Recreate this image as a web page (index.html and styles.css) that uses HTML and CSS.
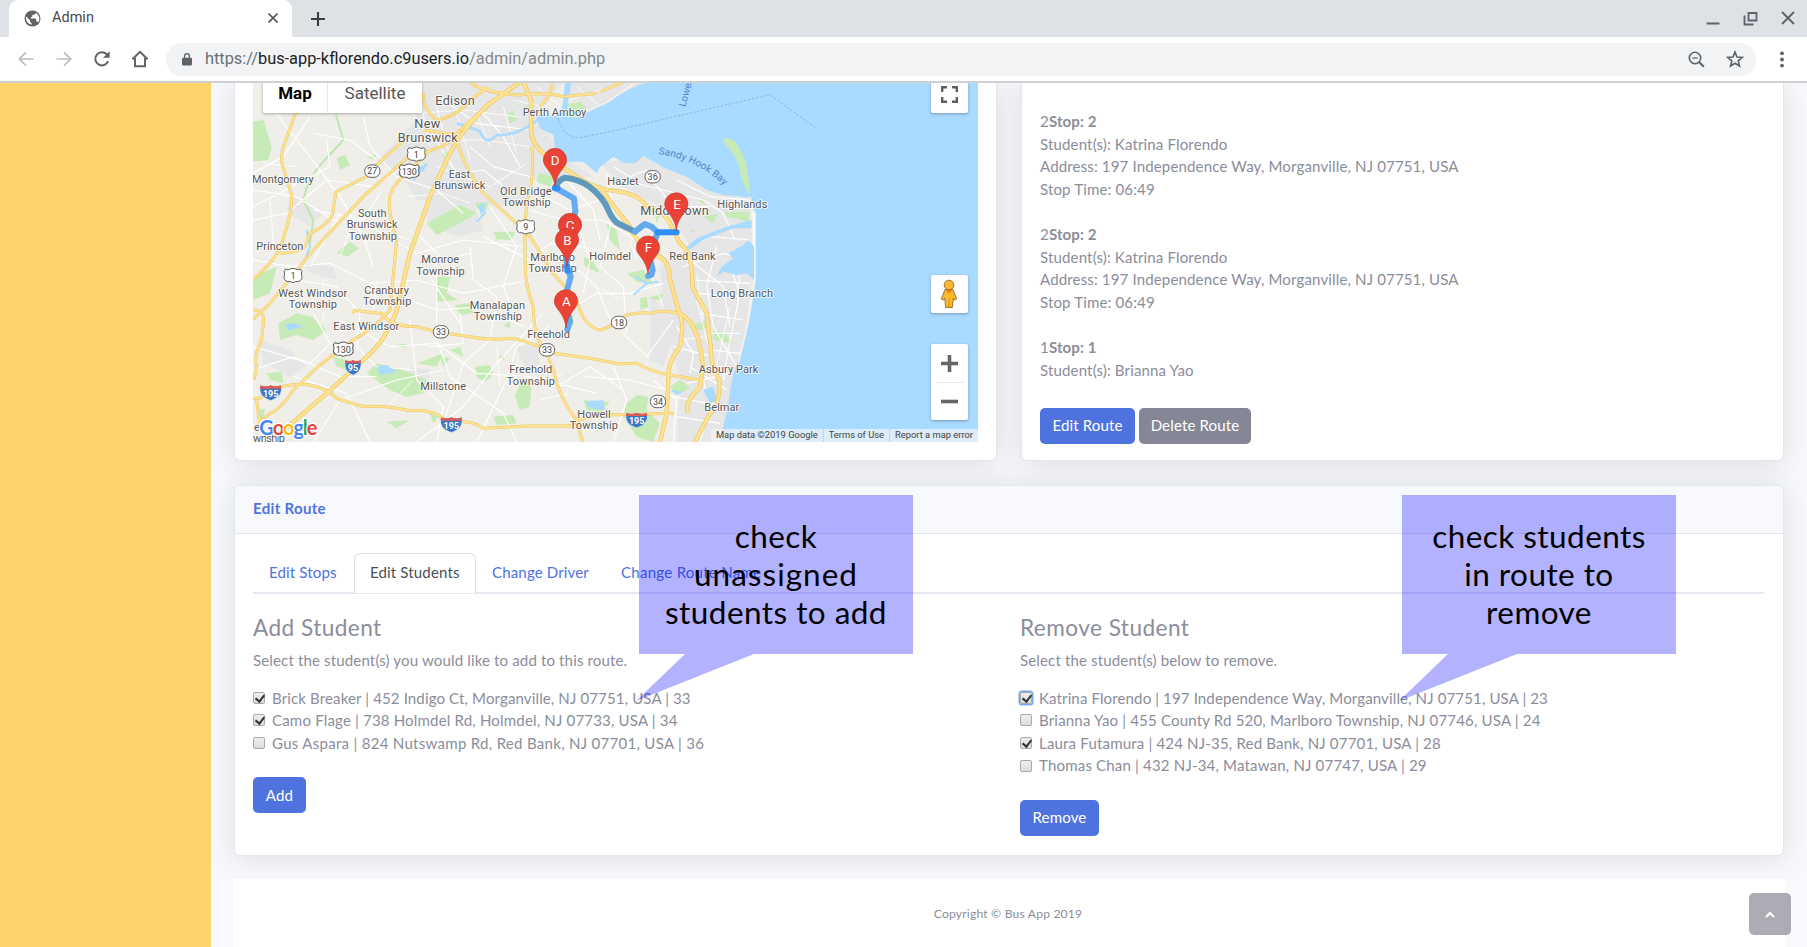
FILE: index.html
```
<!DOCTYPE html>
<html lang="en">
<head>
<meta charset="utf-8">
<title>Admin</title>
<link rel="stylesheet" href="styles.css">
</head>
<body>
<header class="browser">
  <div class="tabstrip">
    <div class="tab">
      <svg class="globe" width="17" height="17" viewBox="0 0 17 17"><circle cx="8.500" cy="8.500" r="8" fill="#5f6368"/><path d="M2.200 6.500 6 10.200v1.600l1.600 1.500v1.400A6.500 6.500 0 0 1 2.200 6.500zM11.500 2.700v.5a1.600 1.600 0 0 1-1.600 1.600H8.400v1.600l-1.500.8v1.300h4.500l.9.900v2.200h1.200l.7.800a6.500 6.500 0 0 0-2.700-9.700z" fill="#fff"/></svg>
      <span class="tab-title">Admin</span>
      <svg width="12" height="12" viewBox="0 0 12 12"><path d="M1.500 1.500l9 9M10.500 1.500l-9 9" stroke="#4a4d51" stroke-width="1.700"/></svg>
    </div>
    <svg class="newtab" width="16" height="16" viewBox="0 0 16 16"><path d="M8 1v14M1 8h14" stroke="#3c4043" stroke-width="2.100"/></svg>
    <div class="winbtns">
      <svg width="14" height="14" viewBox="0 0 14 14"><path d="M.5 12.500h13" stroke="#5f6368" stroke-width="2"/></svg>
      <svg width="15" height="15" viewBox="0 0 15 15"><path d="M5.500 2h8v7.500h-8zM1.500 4.500v9h9" fill="none" stroke="#5f6368" stroke-width="1.800"/></svg>
      <svg width="14" height="14" viewBox="0 0 14 14"><path d="M1 1l12 12M13 1L1 13" stroke="#5f6368" stroke-width="1.900"/></svg>
    </div>
  </div>
  <div class="toolbar">
    <svg width="16" height="16" viewBox="0 0 16 16"><path d="M15.500 8H1.500M8 1.300 1.300 8 8 14.700" fill="none" stroke="#babcbe" stroke-width="1.700"/></svg>
    <svg width="16" height="16" viewBox="0 0 16 16"><path d="M.5 8h14M8 1.300 14.700 8 8 14.700" fill="none" stroke="#babcbe" stroke-width="1.700"/></svg>
    <svg width="18" height="18" viewBox="0 0 18 18"><path d="M15.100 11.200A6.600 6.600 0 1 1 13.700 4.300L15 5.600" fill="none" stroke="#5f6368" stroke-width="2"/><path d="M16.600 1.200v6.600H10z" fill="#5f6368"/></svg>
    <svg width="18" height="18" viewBox="0 0 18 18"><path d="M1.300 9.300 9 1.800l7.700 7.500M4 8v8.200h10V8" fill="none" stroke="#5f6368" stroke-width="2"/></svg>
    <div class="omnibox">
      <svg width="10" height="13" viewBox="0 0 11 14"><rect y="5" width="11" height="8.500" rx="1.200" fill="#5f6368"/><path d="M2.800 5.500V3.300a2.700 2.700 0 0 1 5.400 0v2.200" fill="none" stroke="#5f6368" stroke-width="1.500"/></svg>
      <span class="url"><span class="scheme">https://</span><b>bus-app-kflorendo.c9users.io</b>/admin/admin.php</span>
      <svg width="17" height="17" viewBox="0 0 17 17"><circle cx="7" cy="7" r="5.700" fill="none" stroke="#5f6368" stroke-width="1.600"/><path d="M4.300 7h5.400" stroke="#5f6368" stroke-width="1.300"/><path d="M11 11l4.800 4.800" stroke="#5f6368" stroke-width="2.100"/></svg>
      <svg width="18" height="18" viewBox="0 0 18 18"><path d="M9 2l2 5 5.300.4-4.100 3.400 1.300 5.200L9 13.200 4.500 16l1.300-5.200L1.700 7.400 7 7z" fill="none" stroke="#5f6368" stroke-width="1.600"/></svg>
    </div>
    <svg width="4" height="17" viewBox="0 0 4 17"><g fill="#5f6368"><circle cx="2" cy="2.300" r="1.900"/><circle cx="2" cy="8.500" r="1.900"/><circle cx="2" cy="14.600" r="1.900"/></g></svg>
  </div>
</header>

<div class="page">
  <aside class="sidebar"></aside>
  <main class="content">
    <div class="row">
      <section class="card map-card">
        <div class="map">
          <svg class="map-art" viewBox="69 6 2175 1080" width="725" height="360">
            <defs>
              <path id="pin" d="M0 80C-3 55-10 45-20 30C-28 19-35 12-35 0A35 35 0 0 1 35 0C35 12 28 19 20 30C10 45 3 55 0 80z"/>
              <path id="us" d="M-22-20Q-14-15-8-20Q0-24 8-20Q14-15 22-20Q30-14 25-5Q31 12 18 17Q6 17 0 21Q-6 17-18 17Q-31 12-25-5Q-30-14-22-20z" fill="#fff" stroke="#616161" stroke-width="3"/>
              <rect id="st" x="-23" y="-18" width="46" height="37" rx="18" fill="#fff" stroke="#616161" stroke-width="3"/>
              <g id="is"><path d="M-31-22Q-15-16 0-22Q15-16 31-22Q40 12 0 24Q-40 12-31-22z" fill="#3d78c4" stroke="#fff" stroke-width="2"/><path d="M-31-22Q-15-16 0-22Q15-16 31-22L32-12H-32z" fill="#dd5b55"/></g>
              <path id="sandy" d="M1285 222Q1410 240 1490 325"/>
              <path id="hw" d="M198 95L160 200Q150 240 160 265L185 345Q188 390 160 475Q150 520 105 565L69 600M540 165L440 255Q430 280 415 287L318 335L308 400Q300 430 240 460L225 500Q200 520 150 520M790 60L680 160Q650 200 620 205L530 235L400 350L250 510L120 670L69 718M600 210L540 270Q480 320 478 360Q475 400 500 480L480 690Q440 740 370 780L270 855L190 930Q150 990 120 1000L95 1020M680 180Q700 260 760 340L860 430Q890 455 900 470Q940 530 960 570L1040 660Q1060 740 1110 750Q1140 745 1190 705Q1240 695 1260 700Q1310 685 1360 705M905 200Q915 290 890 370L885 440V540Q885 620 910 680Q910 770 945 810L970 870Q990 960 1040 1020L1058 1086M370 700Q370 688 390 693Q440 700 455 700Q480 740 560 740L620 755L720 770Q780 782 840 775Q890 780 970 820L1080 835L1170 852L1220 850Q1260 875 1320 885L1410 900M69 955Q100 960 110 935Q180 905 240 915Q290 925 320 955L400 980Q460 975 540 992Q610 985 660 1030Q720 1015 760 1045L900 1038H1020Q1060 1005 1130 1005L1330 1000M69 690Q105 690 100 730L95 780Q70 830 80 860L72 900M80 960L90 1040M580 40Q580 90 620 120Q680 110 720 60L775 20M720 6Q760 40 870 45Q950 35 1000 50L1100 40M930 80Q960 50 970 6M1110 35L1180 6M580 150L680 165"/>
              <path id="hb" d="M870 6L780 70Q690 150 650 240L600 350L540 520L500 690Q470 780 400 840L290 940L150 1060M880 6L903 60V150Q905 200 960 235L1040 290Q1100 330 1170 335Q1230 345 1250 380Q1300 390 1320 430L1350 490Q1390 520 1387 620L1430 700L1442 800Q1440 850 1468 900Q1470 980 1440 1000L1395 1086M1110 322Q1150 380 1200 440Q1230 510 1290 530Q1320 550 1318 590L1345 690Q1365 730 1350 800Q1310 850 1315 900L1310 1000L1290 1086M1360 705Q1400 740 1410 800Q1425 860 1410 920Q1380 950 1372 975V1000"/>
            </defs>
            <rect x="69" y="6" width="2175" height="1080" fill="#efeee9"/>
            <g fill="#e6e6e6">
              <path d="M540 6H1000L920 110L1000 230L1090 290L900 300L880 380L700 370L560 360L520 300L440 240L560 120z"/>
              <path d="M1110 250L1240 230L1370 290L1560 355V420L1575 540L1540 780L1470 1086H1340L1350 900L1300 700L1290 560L1380 500L1320 400L1180 320z"/>
              <path d="M1260 640L1340 740L1300 860L1260 840zM90 780L180 810L230 860L180 890L100 850zM860 800L920 790L930 850L890 880zM580 380L650 330L720 340L760 450L690 470L600 440zM180 340L280 400L240 440L170 400zM540 860L600 870L590 930L530 900zM220 550L310 560L320 600L240 580zM1000 6L1110 6L1255 6L1130 70L1040 100z"/>
            </g>
            <g fill="#c7ebb7">
              <path d="M69 125L100 120L125 200L115 240L69 245zM145 730L200 700L245 710L290 750L250 780L200 765L150 780zM410 880L440 850L520 870L590 900L580 940L530 950L480 930zM590 430L690 375L740 400L690 430L620 465zM320 520L360 485L385 505L355 530zM620 590L660 590L650 640L685 660L620 665zM925 280L975 290L960 320L920 305zM790 455L855 455L845 480L800 478zM855 950L870 910L905 900L900 980L870 990zM735 860L780 855L790 885L765 905L740 890zM790 1010L850 1005L860 1030L800 1035zM1060 960L1140 965L1110 1000L1070 990zM1130 430L1160 450L1170 510L1140 480zM1190 580L1240 570L1270 610L1220 605zM1190 970L1220 945L1255 950L1250 990L1290 1030L1270 1086L1220 1070L1180 1010zM1320 920L1350 900L1380 925L1340 945zM1450 750L1480 755L1510 790L1450 780zM1420 410L1465 400L1450 430zM1480 395L1560 395L1555 425L1490 410zM675 675L720 670L730 700L690 705zM320 235L345 225L360 255L330 270zM69 590L140 560L120 640L69 660zM110 880L155 875L160 910L120 900zM470 1025L540 1020L500 1045zM560 850L640 820L620 860zM880 80L910 75L905 95zM1010 80L1050 65L1070 85L1030 115zM1370 190L1400 195L1390 215zM1370 740L1440 720L1420 750zM310 830L350 840L370 875L320 860zM1000 70L1040 70L1040 105L1010 115zM640 215L665 220L655 240L638 235zM735 370L775 365L770 390L740 385zM830 105L850 90L860 120L840 130zM1060 530L1090 545L1110 580L1065 560zM1000 700L1030 705L1030 735L1005 730zM820 735L840 725L840 745zM410 230L440 225L430 240zM90 990L105 985L100 1020L88 1015zM1230 655L1250 650L1255 680L1232 690zM1250 655L1300 640L1290 660zM1400 450L1380 460L1385 450zM800 830L820 825L825 840zM600 1000L625 1010L610 1030zM1275 410L1290 405L1280 430zM1405 360L1425 358L1420 372zM660 810L690 800L700 830zM630 830L660 835L640 860zM500 795L530 790L525 805z"/>
            </g>
            <path d="M318 105L340 180L280 245Q230 300 220 360L250 420L240 490" fill="none" stroke="#bfe6b0" stroke-width="6"/>
            <g fill="none" stroke="#fff" stroke-width="3.500" stroke-linejoin="round">
              <path d="M69 330L200 350L310 420L420 440L560 520L700 480L880 500M69 420L170 400L290 300L430 320L520 260M130 90L240 230L330 350L400 470L430 560M240 110L160 230L69 280M250 160L360 180L440 240M400 110L420 200L500 290L620 330L700 400M69 540L180 560L300 550L420 610L560 600L700 640L900 600M200 600L320 620L390 700L380 800L440 860L560 870M250 700L300 790L240 850L69 800M330 720L480 800L620 790L740 880L900 890L1100 940M480 640L620 690L760 680L880 740M540 720L560 900L640 980L620 1086M620 540V780L660 890L820 1000L860 1086M720 500L730 600L800 650L780 780L700 850L640 1030M560 1086L700 980L800 850L940 700M69 870L190 830L330 890L440 890M190 890L350 940L420 1086M250 1086L330 960L500 900L640 870M740 1086L830 900L860 800L960 740M780 380L860 500L820 620L860 720M760 470L900 540L960 490L1120 510M900 390L1000 420L1120 420L1250 500M1000 530L1100 620L1150 740M1000 700L1100 640L1200 640L1300 610M1040 420L1080 540L1060 640M1130 280L1150 400L1110 560L1180 620L1190 760M1180 760L1250 830L1330 720M1060 890L1200 900L1310 930M1150 860L1190 960L1150 1086M980 920L1080 860L1180 930M940 350L1020 390L1110 360M720 200L790 260L900 290M600 150L680 280L760 270L860 350M750 90L820 170L870 260M640 60L740 130L900 150M1000 290L1090 390L1110 480M290 180L300 260L69 380M450 340L400 420L250 390M330 400L240 560M580 560L690 730M560 460L640 540L720 520M600 800L700 790L690 700"/>
              <path d="M1180 300L1300 330L1420 360L1480 400L1515 480M1150 260L1200 290L1250 270M1250 280L1330 380L1440 380M1340 520L1440 470L1560 480M1360 560L1480 520L1570 540V400M1390 600L1560 610M1390 640L1550 650M1410 700L1540 720M1440 760L1530 760M1440 810L1530 820M1380 540L1480 620L1500 740M1460 500L1430 620L1450 740L1520 860M1500 560L1530 640L1500 780L1480 900M1380 860L1490 930M1370 910L1500 880M1330 950L1480 980M1340 1010L1470 1030M1420 900L1440 980L1410 1086M1270 900L1340 960L1330 1086M1340 740L1390 820L1380 880M1330 800L1450 830M1560 360L1440 350L1340 300"/>
            </g>
            <g fill="none" stroke="#fff" stroke-width="2.500">
              <path d="M570 60L600 200M620 80L660 230M680 100L720 240M740 100L780 200M560 100L700 90L860 110M580 180L760 180L900 200M620 260L780 320L890 250M530 350L640 340L720 370M820 80L860 220M850 60L940 80M920 20L990 80M1040 20L1110 80L1220 6M1020 60L1140 20M360 450L330 530M480 460L540 480M280 600L280 720M440 600L430 690M100 250L200 260M120 360L130 490M450 1000L550 900M800 800L810 920M900 920L1000 880M930 960L1020 940M1120 630L1170 660M1220 540L1200 480M1260 580L1300 680M1400 580L1420 720M1530 560L1520 700M1400 660L1450 860M1360 780L1420 770M1500 680L1450 900"/>
            </g>
            <g fill="#a9daff">
              <path d="M918 105L1000 108L1040 112L1140 65Q1190 25 1255 6H2244V1086H1470L1495 970L1505 900L1535 810L1555 720L1574 600V400L1563 350L1556 352L1480 345L1430 330L1370 290L1300 262L1240 228L1215 250L1180 248L1150 230L1110 262L1100 280L1060 245L1010 245L975 200L970 165L930 145z"/>
              <path d="M1005 6L1025 6L1015 60L1008 110H990L1000 60zM1360 510L1400 475L1490 440L1565 420V445L1510 445L1420 480L1380 508zM1495 520L1540 495L1555 480L1572 500V600L1550 580L1520 585L1480 575L1460 590L1475 560L1510 535zM440 860L470 855L500 875L450 885zM165 735L190 728L220 740L175 750zM1065 965L1120 960L1125 990L1080 985zM1420 930L1450 920L1460 960L1440 970zM560 265L590 255L580 275zM745 380L765 370L755 410zM1320 930L1360 935L1340 945z"/>
              <path d="M680 130Q720 140 750 155Q770 200 800 165Q860 170 930 115" fill="none" stroke="#a9daff" stroke-width="8"/>
              <path d="M755 370L765 400L740 425M230 450L240 500L225 540M590 250L550 300M1210 645L1250 610L1285 605M1215 590L1250 610" fill="none" stroke="#a9daff" stroke-width="6"/>
            </g>
            <path d="M1480 185Q1480 168 1510 180Q1545 220 1552 270L1562 345L1550 330L1535 302Q1530 250 1505 215z" fill="#c7ebb7"/>
            <path d="M1575 395V600L1555 725L1525 850" fill="none" stroke="#f3f3f2" stroke-width="5"/>
            <path d="M985 115Q1000 175 1050 173L1140 155L1620 44L1755 142" fill="none" stroke="#8fa9c4" stroke-width="2.500" stroke-dasharray="7 5"/>
            <use href="#hw" fill="none" stroke="#ecc65f" stroke-width="9"/>
            <use href="#hb" fill="none" stroke="#ecc65f" stroke-width="13"/>
            <use href="#hw" fill="none" stroke="#fde293" stroke-width="6"/>
            <use href="#hb" fill="none" stroke="#fde293" stroke-width="9"/>

            <g class="lbl">
              <text x="616" y="75" font-size="38" textLength="118">Edison</text>
              <text x="553" y="145" font-size="38" textLength="78">New</text>
              <text x="503" y="186" font-size="38" textLength="180">Brunswick</text>
              <text x="878" y="108" textLength="191">Perth Amboy</text>
              <text x="656" y="294" textLength="64">East</text><text x="613" y="327" textLength="153">Brunswick</text>
              <text x="810" y="345" textLength="155">Old Bridge</text><text x="817" y="379" textLength="145">Township</text>
              <text x="66" y="308" textLength="185">Montgomery</text>
              <text x="384" y="411" textLength="86">South</text><text x="350" y="445" textLength="153">Brunswick</text><text x="356" y="479" textLength="145">Township</text>
              <text x="79" y="510" textLength="141">Princeton</text>
              <text x="574" y="550" textLength="113">Monroe</text><text x="559" y="585" textLength="145">Township</text>
              <text x="901" y="543" textLength="134">Marlboro</text><text x="895" y="577" textLength="145">Township</text>
              <text x="1078" y="541" textLength="125">Holmdel</text>
              <text x="145" y="651" textLength="207">West Windsor</text><text x="176" y="685" textLength="145">Township</text>
              <text x="403" y="641" textLength="134">Cranbury</text><text x="399" y="675" textLength="145">Township</text>
              <text x="719" y="686" textLength="166">Manalapan</text><text x="731" y="720" textLength="145">Township</text>
              <text x="310" y="750" textLength="198">East Windsor</text>
              <text x="892" y="774" textLength="128">Freehold</text>
              <text x="838" y="880" textLength="129">Freehold</text><text x="830" y="914" textLength="145">Township</text>
              <text x="571" y="931" textLength="137">Millstone</text>
              <text x="1042" y="1013" textLength="100">Howell</text><text x="1019" y="1047" textLength="145">Township</text>
              <text x="1132" y="314" textLength="94">Hazlet</text>
              <text x="1231" y="405" font-size="38" textLength="205">Middletown</text>
              <text x="1462" y="384" textLength="150">Highlands</text>
              <text x="1318" y="539" textLength="139">Red Bank</text>
              <text x="1442" y="651" textLength="187">Long Branch</text>
              <text x="1406" y="880" textLength="179">Asbury Park</text>
              <text x="1423" y="993" textLength="105">Belmar</text>
              <text x="72" y="1054">e</text><text x="69" y="1086" textLength="96">wnship</text>
            </g>
            <g class="water-lbl">
              <text><textPath href="#sandy" textLength="222">Sandy Hook Bay</textPath></text>
              <text transform="translate(1366 82) rotate(-75)">Lower</text>
            </g>
            <g class="shield">
              <use href="#st" x="427" y="273"/><text x="427" y="283">27</text>
              <use href="#us" x="559" y="223"/><text x="559" y="233">1</text>
              <use href="#us" transform="translate(538 274) scale(1.1 1)"/><text x="538" y="284">130</text>
              <use href="#us" x="887" y="441"/><text x="887" y="451">9</text>
              <use href="#st" x="1268" y="290"/><text x="1268" y="300">36</text>
              <use href="#us" x="189" y="587"/><text x="189" y="597">1</text>
              <use href="#st" x="633" y="755"/><text x="633" y="765">33</text>
              <use href="#st" x="951" y="809"/><text x="951" y="819">33</text>
              <use href="#us" transform="translate(340 808) scale(1.1 1)"/><text x="340" y="818">130</text>
              <use href="#st" x="1167" y="727"/><text x="1167" y="737">18</text>
              <use href="#st" x="1284" y="964"/><text x="1284" y="974">34</text>
            </g>
            <g class="inter">
              <use href="#is" transform="translate(369 862) scale(.75 1)"/><text x="369" y="873">95</text>
              <use href="#is" x="122" y="938"/><text x="122" y="950">195</text>
              <use href="#is" x="664" y="1034"/><text x="664" y="1046">195</text>
              <use href="#is" x="1220" y="1020"/><text x="1220" y="1032">195</text>
            </g>
            <g fill="none" stroke-linecap="round" stroke-linejoin="round" stroke-width="18">
              <path d="M975 323L1032 355L1036 395L1022 450L1010 480V560L1022 590L1003 660L1020 725L1012 748" stroke="#4a9ff5" stroke-opacity=".85"/>
              <path d="M975 323Q985 300 1005 293Q1050 298 1078 320Q1118 350 1135 390Q1150 425 1168 432L1215 455" stroke="#5495ba" stroke-opacity=".95"/>
              <path d="M1215 455L1245 432L1265 440L1283 457L1275 480M1262 545L1268 570L1264 585L1254 588" stroke="#62a9ee"/>
              <path d="M1283 457H1340M975 325H983M1012 560V572" stroke="#2f8ffa"/>
            </g>
            <g fill="#ea4335" stroke="#b92b20" stroke-width="1.500">
              <use href="#pin" x="975" y="240"/><use href="#pin" x="1339" y="373"/><use href="#pin" x="1020" y="435"/>
            </g>
            <g class="pin-lbl"><text x="975" y="254">D</text><text x="1341" y="387">E</text><text x="1020" y="449">C</text></g>
            <g fill="#ea4335" stroke="#b92b20" stroke-width="1.500">
              <use href="#pin" x="1011" y="480"/><use href="#pin" x="1008" y="664"/><use href="#pin" x="1254" y="503"/>
            </g>
            <g class="pin-lbl"><text x="1012" y="494">B</text><text x="1009" y="679">A</text><text x="1255" y="517">F</text></g>
            <text class="glogo" x="88" y="1065" textLength="174"><tspan fill="#4285f4">G</tspan><tspan fill="#ea4335">o</tspan><tspan fill="#fbbc05">o</tspan><tspan fill="#4285f4">g</tspan><tspan fill="#34a853">l</tspan><tspan fill="#ea4335">e</tspan></text>
          </svg>
          <div class="map-type"><b>Map</b><span>Satellite</span></div>
          <div class="map-controls">
            <div class="ctl full"><svg width="17" height="17" viewBox="0 0 17 17"><path d="M1.200 6V1.200H6M11 1.200h4.800V6M15.800 11v4.800H11M6 15.800H1.200V11" fill="none" stroke="#5f5f5f" stroke-width="2.400"/></svg></div>
            <div class="ctl peg"><svg width="18" height="30" viewBox="0 0 18 30"><path d="M5 10.500h8l3.700 9.500-2.200 1-1.200-2-1 9.500H5.700l-1-9.500-1.200 2-2.200-1z" fill="#fdb92c" stroke="#8a6a2a" stroke-width=".9"/><path d="M9 19.500v9" stroke="#d98b1d"/><path d="M5.500 10.600h7L9 14.500z" fill="#e67e22"/><circle cx="9" cy="6" r="4.800" fill="#fdb92c" stroke="#8a6a2a" stroke-width=".9"/></svg></div>
            <div class="ctl zoom"><svg width="17" height="17" viewBox="0 0 17 17"><path d="M8.500 0v17M0 8.500h17" stroke="#666" stroke-width="3.600"/></svg><i></i><svg width="17" height="17" viewBox="0 0 17 17"><path d="M0 8.500h17" stroke="#666" stroke-width="3.600"/></svg></div>
          </div>
          <div class="attrib"><span>Map data ©2019 Google</span><span>Terms of Use</span><span>Report a map error</span></div>
        </div>
      </section>
      <section class="card stops">
        <p>2<b>Stop: 2</b><br>Student(s): Katrina Florendo<br>Address: 197 Independence Way, Morganville, NJ 07751, USA<br>Stop Time: 06:49</p>
        <p>2<b>Stop: 2</b><br>Student(s): Katrina Florendo<br>Address: 197 Independence Way, Morganville, NJ 07751, USA<br>Stop Time: 06:49</p>
        <p>1<b>Stop: 1</b><br>Student(s): Brianna Yao</p>
        <div class="btns"><button class="btn w-edit">Edit Route</button><button class="btn gray w-del">Delete Route</button></div>
      </section>
    </div>

    <section class="card edit-card">
      <h6 class="card-head">Edit Route</h6>
      <div class="card-body">
        <nav class="tabs"><a class="t1">Edit Stops</a><a class="active">Edit Students</a><a class="t3">Change Driver</a><a class="t4">Change Route Name</a></nav>
        <div class="cols">
          <div class="col">
            <h4>Add Student</h4>
            <p class="hint">Select the student(s) you would like to add to this route.</p>
            <label><i class="cb on"></i>Brick Breaker | 452 Indigo Ct, Morganville, NJ 07751, USA | 33</label>
            <label class="wide"><i class="cb on"></i>Camo Flage | 738 Holmdel Rd, Holmdel, NJ 07733, USA | 34</label>
            <label class="wider"><i class="cb"></i>Gus Aspara | 824 Nutswamp Rd, Red Bank, NJ 07701, USA | 36</label>
            <button class="btn w-add">Add</button>
          </div>
          <div class="col">
            <h4>Remove Student</h4>
            <p class="hint">Select the student(s) below to remove.</p>
            <label><i class="cb on focus"></i>Katrina Florendo | 197 Independence Way, Morganville, NJ 07751, USA | 23</label>
            <label class="wide"><i class="cb"></i>Brianna Yao | 455 County Rd 520, Marlboro Township, NJ 07746, USA | 24</label>
            <label class="wide"><i class="cb on"></i>Laura Futamura | 424 NJ-35, Red Bank, NJ 07701, USA | 28</label>
            <label class="wide"><i class="cb"></i>Thomas Chan | 432 NJ-34, Matawan, NJ 07747, USA | 29</label>
            <button class="btn w-rem">Remove</button>
          </div>
        </div>
      </div>
    </section>
    <footer class="footer">Copyright © Bus App 2019</footer>
  </main>
</div>

<div class="callout c1"><span>check</span><span class="spread">unassigned</span><span>students to add</span></div>
<div class="callout c2"><span>check students</span><span>in route to</span><span>remove</span></div>
<div class="to-top"><svg width="10" height="7" viewBox="0 0 10 7"><path d="M1 6l4-4 4 4" fill="none" stroke="#fff" stroke-width="2.200"/></svg></div>
</body>
</html>
```
FILE: styles.css
```
* { box-sizing: border-box; }
html { overflow: hidden; }
body { margin: 0; height: 947px; display: flex; flex-direction: column; overflow: hidden; position: relative; background: #f8f9fc; font-family: Lato, "Open Sans", sans-serif; font-size: 15.07px; line-height: 22.6px; color: #8b8d9b; letter-spacing: 0.13px; }
svg { display: block; flex: none; }

/* browser window */
.browser { flex: none; height: 83px; font-family: Roboto, sans-serif; letter-spacing: 0; background: #fff; border-bottom: 2px solid #cfd0d2; position: relative; z-index: 2; }
.tabstrip { height: 37px; background: #dee1e6; display: flex; align-items: center; padding-left: 9px; }
.tab { width: 283px; height: 37px; background: #fff; border-radius: 9px 9px 0 0; display: flex; align-items: center; padding: 0 13px 1px 15px; }
.tab-title { flex: 1; margin-left: 11px; padding-top: 1px; font-size: 14.5px; color: #45494d; }
.newtab { margin-left: 18px; }
.winbtns { margin-left: auto; display: flex; gap: 23px; padding-right: 12px; }
.toolbar { height: 44px; display: flex; align-items: center; padding: 0 24px 0 18px; gap: 22px; }
.toolbar > svg:nth-child(3) { margin: 0 -1px 0 -1px; }
.toolbar > svg:nth-child(4) { margin-left: -1px; }
.toolbar > svg:last-child { margin-left: 2px; }
.omnibox { flex: none; width: 1590px; height: 33px; margin-left: -5px; border-radius: 17px; background: #f1f3f4; display: flex; align-items: center; padding: 0 12px 0 16px; gap: 21px; }
.url { flex: 1; margin-left: -8px; font-size: 16.35px; color: #84888c; white-space: nowrap; }
.url b { font-weight: 400; color: #202124; }
.scheme { color: #6b6f74; }

/* page */
.page { flex: 1; display: flex; min-height: 0; }
.sidebar { width: 211px; background: #fdd46a; }
.content { flex: 1; padding: 0 23px; display: flex; flex-direction: column; min-width: 0; }
.card { background: #fff; border: 1px solid #e3e6f0; border-radius: 6px; box-shadow: 0 2px 28px rgba(58, 59, 69, .15); }
.row { display: flex; justify-content: space-between; height: 378px; flex: none; }
.row .card { width: 763px; border-top: 0; border-radius: 0 0 6px 6px; }
.map-card { padding: 0 0 0 18px; }

.map { position: relative; width: 725px; height: 360px; margin-top: -1px; overflow: hidden; font-family: Roboto, sans-serif; letter-spacing: 0; }
.lbl { font-size: 33px; fill: #555; stroke: #fff; stroke-opacity: .85; stroke-width: 5px; paint-order: stroke; }
.water-lbl { font-size: 30px; fill: #5683c8; }
.shield { font-size: 27px; fill: #444; text-anchor: middle; }
.inter { font-size: 27px; font-weight: 700; fill: #fff; text-anchor: middle; }
.pin-lbl { font-size: 40px; fill: #fff; text-anchor: middle; }
.glogo { font-family: Lato, sans-serif; font-weight: 700; font-size: 60px; stroke: #fff; stroke-width: 7px; paint-order: stroke; }
.map-type { position: absolute; left: 10px; top: 0; height: 31px; display: flex; background: #fff; border-radius: 0 0 2px 2px; box-shadow: 0 1px 3px rgba(0, 0, 0, .3); font-size: 17px; line-height: 22px; color: #565656; }
.map-type b { width: 65px; text-align: center; color: #000; border-right: 1px solid #e9e9e9; }
.map-type span { width: 94px; text-align: center; }
.map-controls { position: absolute; right: 10px; top: 0; width: 37px; }
.ctl { background: #fff; border-radius: 2px; box-shadow: 0 1px 3px rgba(0, 0, 0, .3); display: flex; flex-direction: column; align-items: center; justify-content: center; }
.full { height: 31px; padding-bottom: 7px; }
.peg { height: 38px; margin-top: 162px; padding-right: 1px; }
.zoom { height: 76px; margin-top: 31px; gap: 10px; }
.zoom i { width: 28px; height: 1px; background: #e6e6e6; }
.attrib { position: absolute; right: 0; bottom: 0; display: flex; gap: 1px; font-size: 9.35px; line-height: 12px; padding-bottom: 0; color: #444; white-space: nowrap; }
.attrib span { background: rgba(245, 245, 245, .68); padding: 0 5px 1px; }

.stops { padding: 27px 0 0 18px; }
.stops p { margin: 0 0 22.6px; }
.stops b { letter-spacing: 0.1px; }
.btns { display: flex; gap: 4px; margin-top: 27px; }
.stops p:nth-of-type(3) { margin-bottom: 0; }
.btn { height: 36px; padding: 0 0 1px; border: 0; border-radius: 5px; background: #4e73df; color: #fff; font: inherit; letter-spacing: inherit; display: block; }
.gray { background: #858796; }
.w-edit { width: 95px; }
.w-del { width: 112px; }
.w-add { width: 53px; margin-top: 23px; }
.w-rem { width: 79px; margin-top: 23px; }

.edit-card { height: 371px; margin-top: 24px; flex: none; }
.card-head { margin: 0; height: 48px; padding: 11px 18px 0; background: #f8f9fc; border-bottom: 1px solid #e3e6f0; border-radius: 6px 6px 0 0; font-size: 15.07px; font-weight: 700; color: #4e73df; letter-spacing: 0.3px; }
.card-body { padding: 19px 19px 0 18px; }
.tabs { display: flex; height: 41px; border-bottom: 2px solid #e6e8f1; color: #4e73df; }
.tabs a { height: 40px; padding: 8px 16px 0; white-space: nowrap; }
.tabs .t1 { width: 101px; }
.tabs .active { width: 122px; border: 1px solid #dddfeb; border-bottom: 0; border-radius: 6px 6px 0 0; background: #fff; color: #495057; padding: 7px 15px 0; }
.tabs .t3 { width: 129px; }
.tabs .t4 { letter-spacing: .25px; }
.cols { display: flex; gap: 23px; }
.col { width: 744px; flex: none; }
h4 { margin: 20px 0 0; font-size: 22.6px; line-height: 27px; font-weight: 400; letter-spacing: 0.45px; }
.hint { margin: 8px 0 15px; }
label { display: flex; align-items: center; height: 22.6px; white-space: nowrap; letter-spacing: .11px; }
.wide { letter-spacing: .16px; }
.wider { letter-spacing: .27px; }
.cb { position: relative; width: 12px; height: 12px; margin: 0 7px 0 0; border: 1px solid #a9a9a9; border-radius: 2px; background: linear-gradient(#eee, #dcdcdc); }
.cb.on::after { content: ""; position: absolute; left: 3px; top: 0; width: 4px; height: 7px; border: solid #333; border-width: 0 2px 2px 0; transform: rotate(38deg); }
.cb.focus { box-shadow: 0 0 0 1.500px #76a7f0; }
.footer { flex: 1; margin: 23px -1px 0; padding: 24px 2px 0 0; background: #fff; text-align: center; font-size: 12.1px; letter-spacing: .2px; }

/* annotations over the page */
.callout { position: absolute; top: 495px; width: 274px; height: 159px; background: rgba(0, 0, 255, .3); color: #000; font-size: 31.500px; line-height: 38px; padding-top: 22px; display: flex; flex-direction: column; align-items: center; letter-spacing: .45px; white-space: nowrap; z-index: 3; }
.callout .spread { letter-spacing: 1px; }
.callout::after { content: ""; position: absolute; left: -3px; top: 159px; width: 118px; height: 47px; background: rgba(0, 0, 255, .3); clip-path: polygon(49px 0, 118px 0, 0 100%); }
.c1 { left: 639px; }
.c2 { left: 1402px; }
.to-top { position: absolute; right: 16px; top: 893px; width: 42px; height: 42px; border-radius: 5px; background: rgba(90, 92, 105, .5); display: flex; align-items: center; justify-content: center; z-index: 3; }
```
